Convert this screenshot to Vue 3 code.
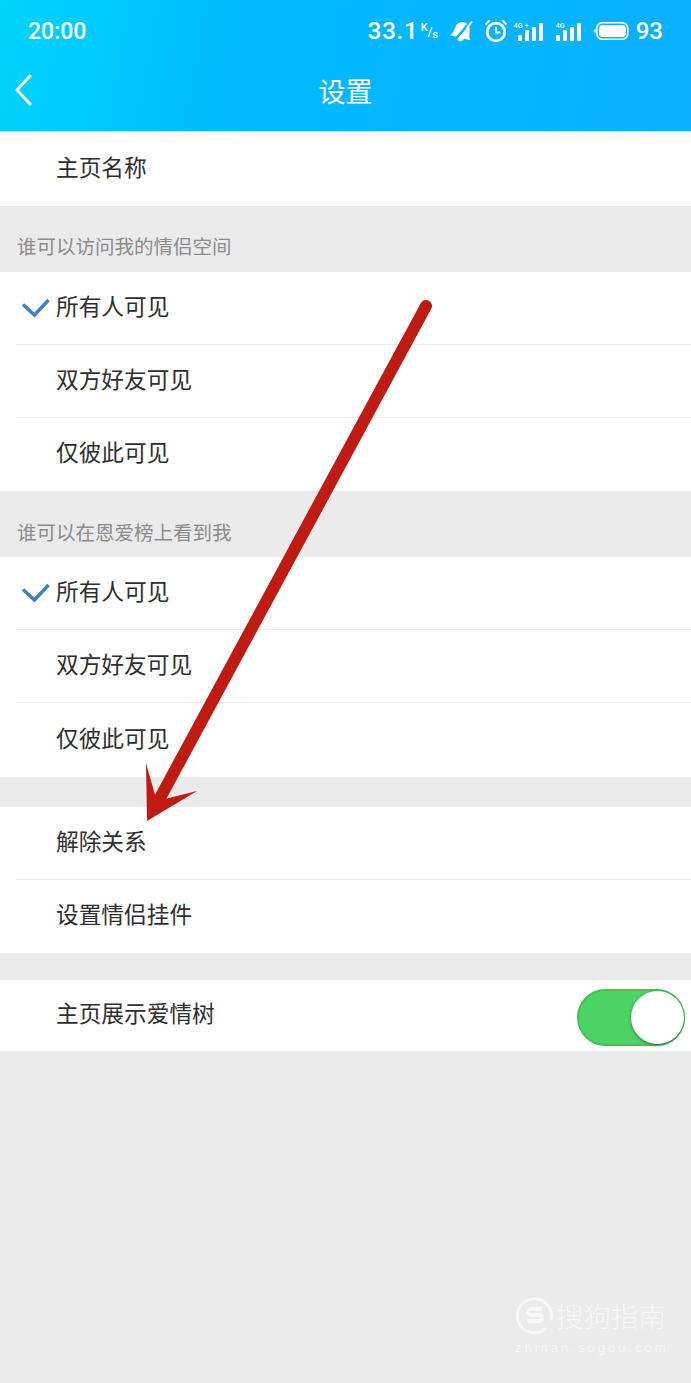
<script setup>
const groupOne = ['所有人可见', '双方好友可见', '仅彼此可见'];
const groupTwo = ['所有人可见', '双方好友可见', '仅彼此可见'];
</script>

<template>
  <div class="page">
    <header class="header">
      <div class="status">
        <span class="time">20:00</span>
        <div class="status-right">
          <span class="speed">33.1</span>
          <span class="unit"><sup>K</sup>/<sub>s</sub></span>
          <svg class="ic-bell" width="24" height="24" viewBox="0 0 24 24">
            <g transform="rotate(14 12 12)">
              <path d="M12 3c-4.500 0-7 3-7.500 7.500L3.500 16 1.500 19h7c.2 2 1.800 3.500 3.500 3.500s3.300-1.500 3.500-3.500h7l-2-3-1-5.500C19 6 16.500 3 12 3z" fill="#fff" />
            </g>
            <path d="M2 24 23 0" stroke="#0cb0fe" stroke-width="2.600" />
            <path d="M17 9 22 2.500" stroke="#fff" stroke-width="2" />
          </svg>
          <svg class="ic-alarm" width="24" height="24" viewBox="0 0 24 24" fill="none" stroke="#fff">
            <circle cx="12" cy="13" r="8.800" stroke-width="2.800" />
            <path d="M12 8v5.500h4.500" stroke-width="2" />
            <path d="M1.500 5.500 5.500 1.500M22.500 5.500 18.500 1.500" stroke-width="2" />
          </svg>
          <div class="signal">
            <span class="net">4G<i>+</i></span>
            <svg width="29" height="18" viewBox="0 0 29 18" fill="#fff">
              <rect x="4" y="12" width="4" height="6" rx="1" />
              <rect x="11" y="7" width="4" height="11" rx="1" />
              <rect x="18" y="4" width="4" height="14" rx="1" />
              <rect x="25" y="0" width="4" height="18" rx="1" />
            </svg>
          </div>
          <div class="signal signal-two">
            <span class="net">4G</span>
            <svg width="29" height="18" viewBox="0 0 29 18" fill="#fff">
              <rect x="4" y="12" width="4" height="6" rx="1" />
              <rect x="11" y="7" width="4" height="11" rx="1" />
              <rect x="18" y="4" width="4" height="14" rx="1" />
              <rect x="25" y="0" width="4" height="18" rx="1" />
            </svg>
          </div>
          <svg class="ic-battery" width="36" height="20" viewBox="0 0 36 20" fill="none">
            <path d="M2.500 7 0.500 10l2 3z" fill="#fff" />
            <rect x="3.800" y="1.800" width="31" height="16.400" rx="5.500" stroke="#fff" stroke-width="1.600" />
            <rect x="6" y="4" width="26.800" height="12" rx="3.500" fill="#fff" />
          </svg>
          <span class="battery-num">93</span>
        </div>
      </div>
      <div class="nav">
        <svg class="back" width="20" height="34" viewBox="0 0 20 34" fill="none">
          <path d="M17 3 4 17l13 14" stroke="#fff" stroke-width="3" stroke-linecap="round" stroke-linejoin="round" />
        </svg>
        <span class="title">设置</span>
      </div>
    </header>

    <div class="row row-first"><span class="label">主页名称</span></div>

    <div class="section-head">谁可以访问我的情侣空间</div>
    <div class="group">
      <div v-for="(item, i) in groupOne" :key="i" class="row" :class="{ divided: i > 0 }">
        <svg v-if="i === 0" class="check" width="30" height="20" viewBox="0 0 30 20" fill="none">
          <path d="M2 6.500 13.500 17 27.500 2" stroke="#3f7fc4" stroke-width="3.400" />
        </svg>
        <span class="label">{{ item }}</span>
      </div>
    </div>

    <div class="section-head section-two">谁可以在恩爱榜上看到我</div>
    <div class="group group-two">
      <div v-for="(item, i) in groupTwo" :key="i" class="row" :class="{ divided: i > 0 }">
        <svg v-if="i === 0" class="check" width="30" height="20" viewBox="0 0 30 20" fill="none">
          <path d="M2 6.500 13.500 17 27.500 2" stroke="#3f7fc4" stroke-width="3.400" />
        </svg>
        <span class="label">{{ item }}</span>
      </div>
    </div>

    <div class="group gap-one">
      <div class="row"><span class="label">解除关系</span></div>
      <div class="row divided"><span class="label">设置情侣挂件</span></div>
    </div>

    <div class="group gap-two">
      <div class="row row-switch">
        <span class="label">主页展示爱情树</span>
        <div class="switch"><div class="knob"></div></div>
      </div>
    </div>

    <!-- red arrow drawn over the screenshot -->
    <svg class="arrow" width="691" height="1383" viewBox="0 0 691 1383" fill="none">
      <path d="M426 306 160 798" stroke="#c01b12" stroke-width="12" stroke-linecap="round" />
      <path d="M146 763 147 821 197 791 165 799 155 795z" fill="#c01b12" />
    </svg>

    <!-- watermark -->
    <div class="watermark">
      <div class="wm-top">
        <svg width="40" height="40" viewBox="0 0 40 40" fill="none">
          <path d="M30 34A17 17 0 1 1 36 24" stroke="#fff" stroke-width="3" stroke-linecap="round" />
          <path d="M27 14H16c-4 0-4 6 0 6h8c4 0 4 6 0 6H12" stroke="#fff" stroke-width="4" />
        </svg>
        <span class="wm-name">搜狗指南</span>
      </div>
      <div class="wm-url">zhinan.sogou.com</div>
    </div>
  </div>
</template>

<style scoped>
.page {
  position: relative;
  width: 691px;
  height: 1383px;
  overflow: hidden;
  background: #ebebeb;
  font-family: "Noto Sans CJK SC", "Liberation Sans", sans-serif;
}

.header {
  height: 131px;
  background: linear-gradient(100deg, #00d4fb 0%, #00bafe 35%, #0cb0fe 100%);
  color: #fff;
}

.status {
  height: 62px;
  padding: 0 28px;
  display: flex;
  align-items: center;
  justify-content: space-between;
  font-family: Roboto, "Liberation Sans", sans-serif;
  font-weight: 500;
}

.time {
  font-size: 23px;
}

.status-right {
  display: flex;
  align-items: center;
}

.speed {
  font-size: 24px;
  letter-spacing: 0.800px;
  width: 50px;
}

.unit {
  font-size: 12px;
  width: 19px;
  padding-left: 3px;
  box-sizing: border-box;
  white-space: nowrap;
}

.unit sup {
  font-size: 11px;
  vertical-align: 5px;
}

.unit sub {
  font-size: 11px;
  vertical-align: -2px;
}

.ic-bell {
  margin-left: 13px;
}

.ic-alarm {
  margin-left: 10px;
}

.signal {
  position: relative;
  margin-left: 6px;
  width: 29px;
  height: 18px;
  margin-top: 1px;
  display: flex;
}

.signal-two {
  margin-left: 9px;
}

.net {
  position: absolute;
  left: 0;
  top: 0;
  font-size: 7px;
  line-height: 7px;
}

.signal-two .net {
  left: 4px;
}

.net i {
  font-style: normal;
  position: relative;
  left: 2px;
}

.ic-battery {
  margin-left: 12px;
}

.battery-num {
  font-size: 24px;
  margin-left: 7px;
}

.nav {
  position: relative;
  height: 69px;
  display: flex;
  align-items: center;
  justify-content: center;
  padding-bottom: 12px;
  box-sizing: border-box;
}

.back {
  position: absolute;
  left: 13px;
  top: 11px;
}

.title {
  font-size: 27px;
}

.row {
  position: relative;
  height: 73px;
  display: flex;
  align-items: center;
  padding-left: 56px;
  padding-bottom: 6px;
  box-sizing: border-box;
  background: #fff;
}

.row-first {
  height: 74px;
  margin-top: 1px;
  padding-bottom: 5px;
}

.divided::before {
  content: "";
  position: absolute;
  left: 16px;
  right: 0;
  top: -1px;
  height: 1px;
  background: #ebebeb;
}

.label {
  font-size: 22.700px;
  color: #2e2e2e;
}

.check {
  position: absolute;
  left: 21px;
  top: 26px;
}

.section-head {
  height: 66px;
  padding: 27px 0 0 17px;
  box-sizing: border-box;
  font-size: 19.500px;
  line-height: 26px;
  color: #8c8c8c;
}

.section-two {
  padding-top: 28px;
}

.group-two .row:last-child {
  height: 74px;
}

.gap-one {
  margin-top: 30px;
}

.gap-two {
  margin-top: 27px;
}

.row-switch {
  height: 71px;
  padding-bottom: 6px;
  justify-content: space-between;
  padding-right: 6px;
}

.switch {
  position: relative;
  width: 108px;
  height: 57px;
  margin-top: 9px;
  border: 2px solid #42c25b;
  border-radius: 29px;
  box-sizing: border-box;
  background: #4cd265;
}

.knob {
  position: absolute;
  right: -1px;
  top: 0;
  width: 53px;
  height: 53px;
  border-radius: 50%;
  background: #fff;
  box-shadow: 0 1px 3px rgba(30, 90, 50, 0.8);
}

.arrow {
  position: absolute;
  left: 0;
  top: 0;
  pointer-events: none;
}

.watermark {
  position: absolute;
  left: 515px;
  top: 1295px;
  width: 152px;
  color: #fff;
  opacity: 0.6;
}

.wm-top {
  display: flex;
  align-items: center;
  gap: 1px;
}

.wm-name {
  font-size: 27.500px;
  font-weight: 300;
  white-space: nowrap;
}

.wm-url {
  margin-top: 5px;
  font-family: "Liberation Sans", sans-serif;
  font-size: 13px;
  letter-spacing: 3px;
  white-space: nowrap;
}
</style>
